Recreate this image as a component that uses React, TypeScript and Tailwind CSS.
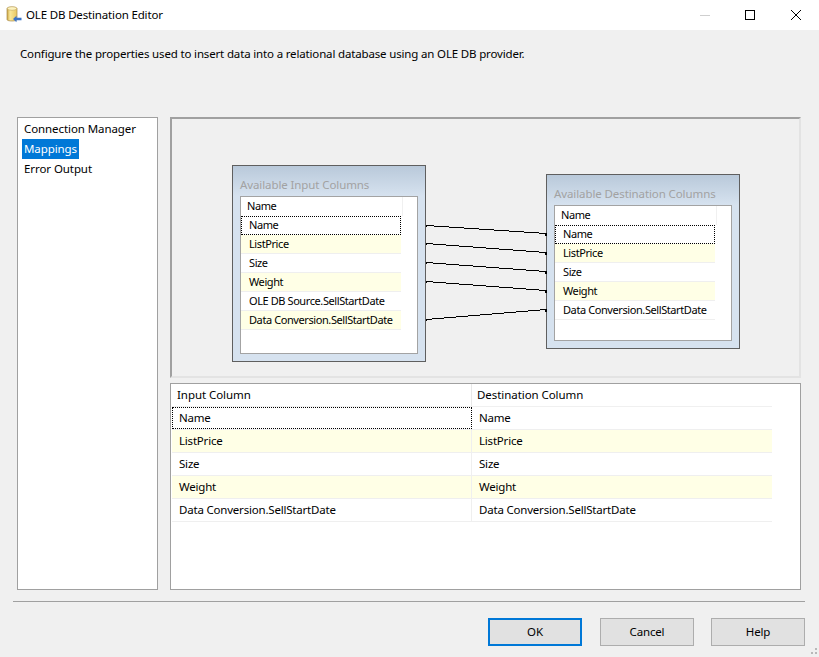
const font = "font-['Noto_Sans','Open_Sans',sans-serif]";

function DbIcon() {
  return (
    <svg width="16" height="18" viewBox="0 0 16 18" className="shrink-0">
      <defs>
        <linearGradient id="cyl" x1="0" x2="1" y1="0" y2="0">
          <stop offset="0" stopColor="#c9a23f" />
          <stop offset="0.3" stopColor="#f9e89a" />
          <stop offset="1" stopColor="#e9c760" />
        </linearGradient>
      </defs>
      <path d="M1 2.5C1 0.5 11 0.5 11 2.5V13.5C11 15.5 1 15.5 1 13.5Z" fill="url(#cyl)" stroke="#a88a4a" strokeWidth="0.7" />
      <ellipse cx="6" cy="2.5" rx="4.6" ry="1.8" fill="#fdf3c0" stroke="#b89a50" strokeWidth="0.5" />
      <path d="M7 13L10.5 9.8V11.8H15.5V14.2H10.5V16.2Z" fill="#3b74c8" />
    </svg>
  );
}

const inputCols = ["Name", "ListPrice", "Size", "Weight", "OLE DB Source.SellStartDate", "Data Conversion.SellStartDate"];
const destCols = ["Name", "ListPrice", "Size", "Weight", "Data Conversion.SellStartDate"];

function ColumnNode({ title, cols, className }: { title: string; cols: string[]; className: string }) {
  return (
    <div className={`absolute flex w-[194px] flex-col border border-[#5f5f5f] bg-[linear-gradient(#b9c9da,#d6e2ef_30px)] px-[7px] pt-[11px] pb-[7px] ${className}`}>
      <div className="h-[19px] shrink-0 text-[11.5px] leading-[16px] tracking-[-0.1px] text-[#a2a2a2]">{title}</div>
      <div className="flex-1 border border-[#a3a3a3] bg-white">
        <div className="h-[19px] w-[162px] border-r border-[#f0f0f0] bg-white pl-[6px] text-[11px] leading-[18px] tracking-[-0.41px] text-black">Name</div>
        {cols.map((c, i) => (
          <div
            key={c}
            className={`h-[19px] w-[160px] whitespace-nowrap text-[11px] tracking-[-0.41px] text-black ${i === 0 ? "border border-dotted border-black pl-[7px] leading-[16px]" : "border-b border-[#efefef] pl-[8px] leading-[18px]"} ${i % 2 === 1 ? "bg-[#ffffe6]" : "bg-white"}`}
          >
            {c}
          </div>
        ))}
      </div>
    </div>
  );
}

const links = [
  [225, 233],
  [243, 252],
  [262, 271],
  [281, 290],
  [319, 309],
];

function Links() {
  return (
    <svg className="absolute left-[426px] top-[200px]" width="122" height="130" viewBox="426 200 122 130" shapeRendering="crispEdges">
      {links.map(([a, b], i) => (
        <g key={i}>
          <line x1="426" y1={a + 0.5} x2="546" y2={b + 0.5} stroke="#000" strokeWidth="1" />
          <rect x="426" y={a - 0.5} width="1" height="2" fill="#000" />
          <rect x="545" y={b - 0.5} width="2" height="3" fill="#000" />
        </g>
      ))}
    </svg>
  );
}

function Btn({ label, primary, className = "" }: { label: string; primary?: boolean; className?: string }) {
  return (
    <div
      className={`flex h-[28px] w-[94px] items-center justify-center bg-[#e1e1e1] text-black ${primary ? "border-2 border-[#0078d7]" : "border border-[#adadad]"} ${className}`}
    >
      {label}
    </div>
  );
}

export default function App() {
  return (
    <div className={`relative h-[657px] w-[819px] overflow-hidden bg-[#f0f0f0] text-[11.5px] tracking-[-0.16px] text-black ${font}`}>
      {/* title bar */}
      <div className="flex h-[30px] items-center bg-white pl-[6px]">
        <DbIcon />
        <span className="ml-[4px]">OLE DB Destination Editor</span>
        <div className="ml-auto flex items-center">
          <span className="mr-[35px] h-px w-[10px] bg-[#cfcfcf]" />
          <span className="mr-[36px] h-[10px] w-[10px] border border-black" />
          <svg width="10" height="10" viewBox="0 0 10 10" className="mr-[18px]">
            <path d="M0 0L10 10M10 0L0 10" stroke="#000" strokeWidth="1" />
          </svg>
        </div>
      </div>

      {/* description */}
      <div className="h-[87px] pl-[20px] pt-[15px] leading-[18px]">
        Configure the properties used to insert data into a relational database using an OLE DB provider.
      </div>

      {/* main */}
      <div className="flex h-[473px] pl-[17px]">
        <div className="w-[141px] border border-[#a0a0a0] bg-white pl-[4px] pt-[1px] tracking-[-0.08px]">
          <div className="h-[20px] px-[2px] leading-[20px]">Connection Manager</div>
          <div className="h-[20px] w-[57px] bg-[#0078d7] px-[2px] leading-[20px] text-white">Mappings</div>
          <div className="h-[20px] px-[2px] leading-[20px]">Error Output</div>
        </div>

        <div className="ml-[12px] flex w-[631px] flex-col">
          <div className="h-[261px] shrink-0 border-2 border-[#a0a0a0] border-r-[#e3e3e3] border-b-[#e3e3e3]" />
          <div className="mt-[5px] flex-1 border border-[#a0a0a0] bg-white pl-[1px]">
            <div className="flex h-[23px] w-[600px] border-b border-[#f0f0f0] tracking-[-0.06px]">
              <div className="w-[300px] border-r border-[#e8e8e8] pl-[5px] leading-[22px]">Input Column</div>
              <div className="w-[300px] pl-[5px] leading-[22px]">Destination Column</div>
            </div>
            {destCols.map((c, i) => (
              <div key={c} className={`flex h-[23px] w-[600px] border-b border-[#efefef] tracking-[-0.2px] ${i % 2 === 1 ? "bg-[#ffffe6]" : "bg-white"}`}>
                <div className={`w-[300px] ${i === 0 ? "border border-dotted border-black pl-[6px] leading-[20px]" : "border-r border-[#efefef] pl-[7px] leading-[22px]"}`}>{c}</div>
                <div className="w-[300px] pl-[7px] leading-[22px]">{c}</div>
              </div>
            ))}
          </div>
        </div>
      </div>

      {/* footer */}
      <div className="mx-[13px] mt-[11px] h-px w-[792px] bg-[#a0a0a0]" />
      <div className="mt-[16px] flex justify-end pr-[14px]">
        <Btn label="OK" primary />
        <Btn label="Cancel" className="ml-[18px]" />
        <Btn label="Help" className="ml-[17px]" />
      </div>

      {/* diagram canvas items */}
      <ColumnNode title="Available Input Columns" cols={inputCols} className="left-[232px] top-[165px] h-[197px]" />
      <ColumnNode title="Available Destination Columns" cols={destCols} className="left-[546px] top-[174px] h-[175px]" />
      <Links />

      {/* size grip */}
      <svg className="absolute bottom-0 right-0" width="12" height="12" viewBox="0 0 12 12">
        <g fill="#b8b8b8">
          <rect x="8" y="3" width="2" height="2" />
          <rect x="4" y="7" width="2" height="2" />
          <rect x="8" y="7" width="2" height="2" />
        </g>
      </svg>
    </div>
  );
}
